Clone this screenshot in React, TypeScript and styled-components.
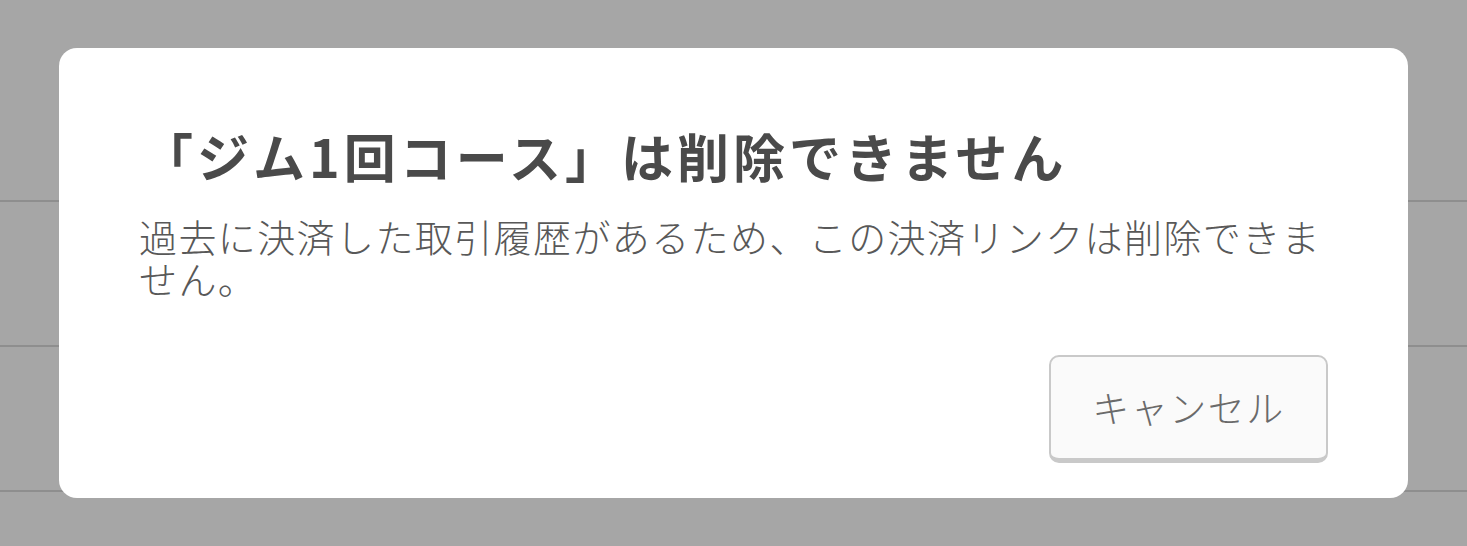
import React from "react";
import styled, { createGlobalStyle } from "styled-components";

const Global = createGlobalStyle`
  html, body { margin: 0; padding: 0; }
  body {
    background: #a6a6a6;
    font-family: "Noto Sans CJK JP", "Noto Sans", sans-serif;
    overflow: hidden;
  }
`;

const Page = styled.div`
  position: relative;
  width: 1467px;
  height: 546px;
  background: #a6a6a6;
  overflow: hidden;
`;

const List = styled.div`
  display: flex;
  flex-direction: column;
  padding-top: 57px;
`;

const Row = styled.div`
  height: 143px;
  border-bottom: 2px solid #8e8e8e;
`;

const Overlay = styled.div`
  position: absolute;
  inset: 0;
  display: flex;
  justify-content: center;
  align-items: flex-start;
  padding-top: 48px;
`;

const Dialog = styled.div`
  width: 1349px;
  box-sizing: border-box;
  background: #ffffff;
  border-radius: 18px;
  padding: 80px 80px 35px 80px;
  display: flex;
  flex-direction: column;
`;

const Title = styled.h2`
  margin: 0;
  font-size: 52px;
  line-height: 60px;
  font-weight: 700;
  color: #4a4a4a;
  letter-spacing: 4px;
  margin-left: 2px;
  margin-top: -2px;
`;

const Body = styled.p`
  margin: 29px 0 0 0;
  font-size: 38px;
  line-height: 42px;
  font-weight: 300;
  color: #585858;
  letter-spacing: 1.4px;
`;

const Actions = styled.div`
  display: flex;
  justify-content: flex-end;
  margin-top: 56px;
`;

const Button = styled.button`
  width: 279px;
  height: 108px;
  box-sizing: border-box;
  border: 2px solid #c9c9c9;
  border-bottom-width: 5px;
  border-radius: 10px;
  background: #fafafa;
  color: #6a6a6a;
  font-family: "Noto Sans CJK JP", "Noto Sans", sans-serif;
  font-size: 37px;
  font-weight: 300;
  letter-spacing: 1.5px;
  padding: 0 0 2px 0;
  cursor: pointer;
`;

export default function App() {
  return (
    <Page>
      <Global />
      <List>
        <Row />
        <Row />
        <Row />
        <Row />
      </List>
      <Overlay>
        <Dialog role="dialog">
          <Title>「ジム1回コース」は削除できません</Title>
          <Body>
            過去に決済した取引履歴があるため、この決済リンクは削除できません。
          </Body>
          <Actions>
            <Button>キャンセル</Button>
          </Actions>
        </Dialog>
      </Overlay>
    </Page>
  );
}
